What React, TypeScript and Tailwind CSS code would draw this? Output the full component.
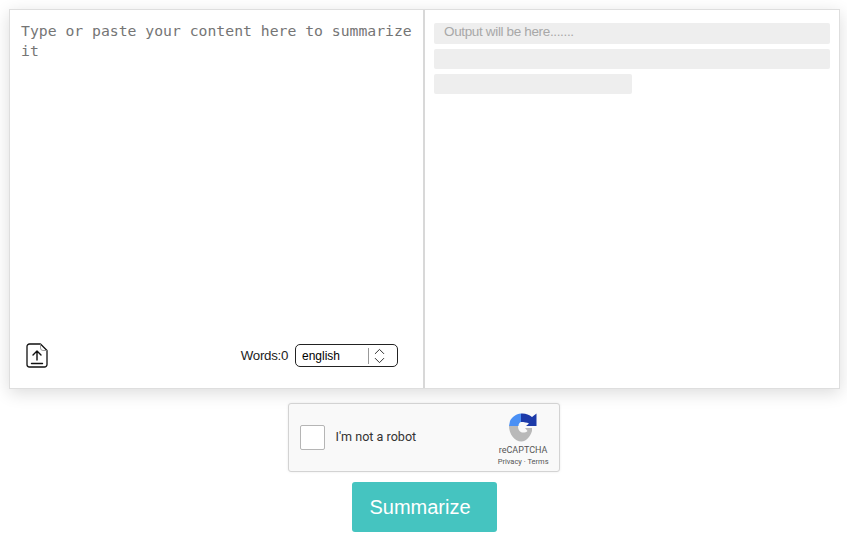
import { ChevronDown, ChevronUp } from 'lucide-react';

function UploadIcon() {
  return (
    <svg width="22" height="25" viewBox="0 0 22 25" fill="none" stroke="#111" strokeWidth="1.3" strokeLinecap="round" strokeLinejoin="round">
      <path d="M3.5 1h11L21 7.5V21.5a2.5 2.5 0 0 1-2.5 2.5h-15A2.5 2.5 0 0 1 1 21.5v-18A2.5 2.5 0 0 1 3.5 1z" />
      <path d="M14.5 1v4a2.5 2.5 0 0 0 2.5 2.5h4" strokeWidth="0.8" stroke="#888" />
      <path d="M11 17V8M7 12l4-4 4 4M5.5 20.5h11" strokeWidth="1.4" />
    </svg>
  );
}

function RecaptchaLogo() {
  return (
    <svg width="28" height="29" viewBox="0 0 28 29">
      <path d="M0 13H9C9 17 11 19.5 14 19.5C16 19.5 17.5 19 18.5 18L16 15H23V18C21 24 17 28.5 12.5 28.5C5.5 28.5 0 21 0 13Z" fill="#b9b9b9" />
      <path d="M12 0.5C16 0 20 1.5 23 4L27.5 0.5V13H17L20 10.5C18 9.5 15 9 12 9Z" fill="#1c3aa9" />
      <path d="M12 0.5C7 1 3 4 1 8L0 13H9.5C9.5 11 10.5 9.5 12 9Z" fill="#4a90f5" />
    </svg>
  );
}

export default function App() {
  return (
    <div className="min-h-[538px] bg-white pt-[9px] font-['Liberation_Sans',sans-serif]">
      <div className="ml-[9px] flex h-[380px] w-[831px] border border-[#dedede] bg-white shadow-[0_4px_16px_rgba(0,0,0,0.14)]">
        <div className="flex w-[415px] flex-col justify-between border-r-2 border-[#d8d8d8] pb-[20px] pl-[11px] pr-[10px] pt-[11px]">
          <p className="font-['DejaVu_Sans_Mono',monospace] text-[14.75px] leading-[19.5px] text-[#757575]">
            Type or paste your content here to summarize it
          </p>
          <div className="flex items-center justify-between pl-[5px] pr-[15px]">
            <UploadIcon />
            <div className="flex items-center gap-[7px]">
              <span className="text-[13.3px] tracking-[-0.3px] text-[#222]">Words:0</span>
              <div className="flex h-[23px] w-[103px] items-center rounded-[5px] border border-[#222] pl-[6px]">
                <span className="w-[66px] text-[12px] leading-[14px] text-black">english</span>
                <div className="flex h-[16px] items-center border-l border-[#999] pl-[2px]">
                  <div className="flex flex-col">
                    <ChevronUp size={17} strokeWidth={1.3} className="-my-[4px] text-[#222]" />
                    <ChevronDown size={17} strokeWidth={1.3} className="-my-[4px] text-[#222]" />
                  </div>
                </div>
              </div>
            </div>
          </div>
        </div>
        <div className="flex flex-1 flex-col gap-[5px] pl-[9px] pr-[9px] pt-[13px]">
          <div className="h-[21px] rounded-[2px] bg-[#eeeeee] pl-[10px] text-[13.5px] leading-[17px] tracking-[-0.35px] text-[#a8a8a8]">
            Output will be here.......
          </div>
          <div className="h-[20px] rounded-[2px] bg-[#eeeeee]" />
          <div className="h-[20px] w-[198px] rounded-[2px] bg-[#eeeeee]" />
        </div>
      </div>

      <div className="mt-[14px] flex flex-col items-center">
        <div className="flex h-[69px] w-[272px] items-center justify-between rounded-[3px] border border-[#d3d3d3] bg-[#f9f9f9] pl-[11px] pr-[10px] shadow-[0_0_3px_rgba(0,0,0,0.08)] font-['Roboto',sans-serif]">
          <div className="flex items-center gap-[11px]">
            <div className="h-[25px] w-[25px] rounded-[2px] border border-[#b5b5b5] bg-white" />
            <span className="text-[12.6px] text-[#333]">I'm not a robot</span>
          </div>
          <div className="flex flex-col items-center pt-[5px]">
            <RecaptchaLogo />
            <span className="mt-[2px] text-[9px] leading-[12px] text-[#555]">reCAPTCHA</span>
            <span className="text-[7.5px] leading-[11px] text-[#555]">Privacy · Terms</span>
          </div>
        </div>
        <button className="ml-[1px] mt-[10px] flex h-[50px] w-[145px] items-center justify-center rounded-[3px] bg-[#45c4c0] pr-[8px] text-[20px] text-white">
          Summarize
        </button>
      </div>
    </div>
  );
}
